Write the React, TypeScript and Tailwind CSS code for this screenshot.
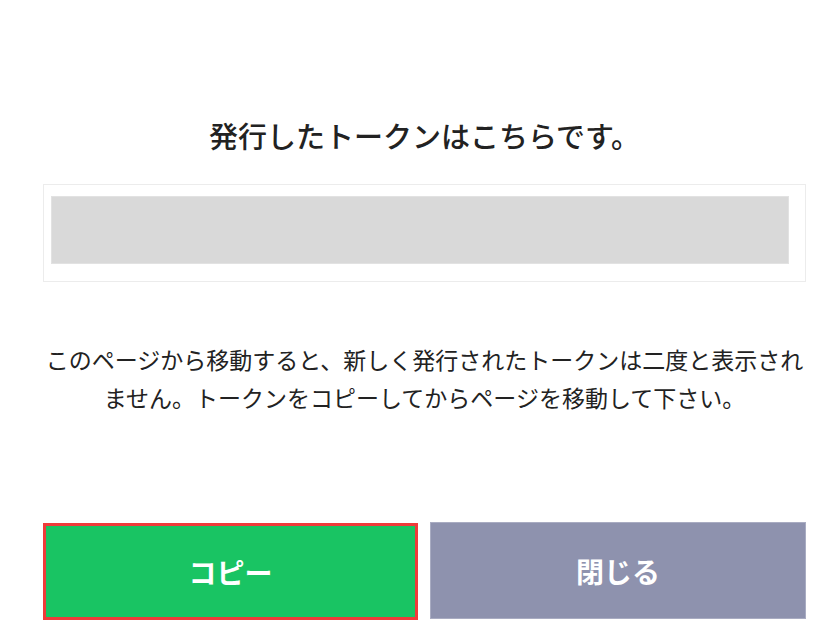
import React from "react";

const font = { fontFamily: '"Noto Sans CJK JP", "Noto Sans", sans-serif' };

const App = () => {
  return (
    <div className="w-[835px] h-[643px] bg-white text-[#222]" style={font}>
      <div className="ml-[43px] w-[763px] pt-[111px] flex flex-col">
        {/* Title */}
        <h2 className="text-center text-[29px] leading-[48px] font-medium">
          発行したトークンはこちらです。
        </h2>

        {/* Token box */}
        <div className="mt-[25px] h-[98px] border border-[#ececec] pl-[7px] pr-[16px] pt-[11px]">
          <div className="h-[68px] bg-[#d9d9d9] border border-[#e2e2e2]"></div>
        </div>

        {/* Notice */}
        <p className="mt-[58px] text-center text-[23px] leading-[38px]">
          このページから移動すると、新しく発行されたトークンは二度と表示されません。トークンをコピーしてからページを移動して下さい。
        </p>

        {/* Buttons */}
        <div className="mt-[107px] flex gap-[12px]">
          <button className="w-[375px] h-[97px] bg-[#19c463] border-[3px] border-[#f03a3a] text-white text-[28px] font-bold">
            コピー
          </button>
          <button className="flex-1 h-[97px] -mt-px bg-[#8e92ae] border border-[#a9acc2] text-white text-[28px] font-bold">
            閉じる
          </button>
        </div>
      </div>
    </div>
  );
};

export default App;
